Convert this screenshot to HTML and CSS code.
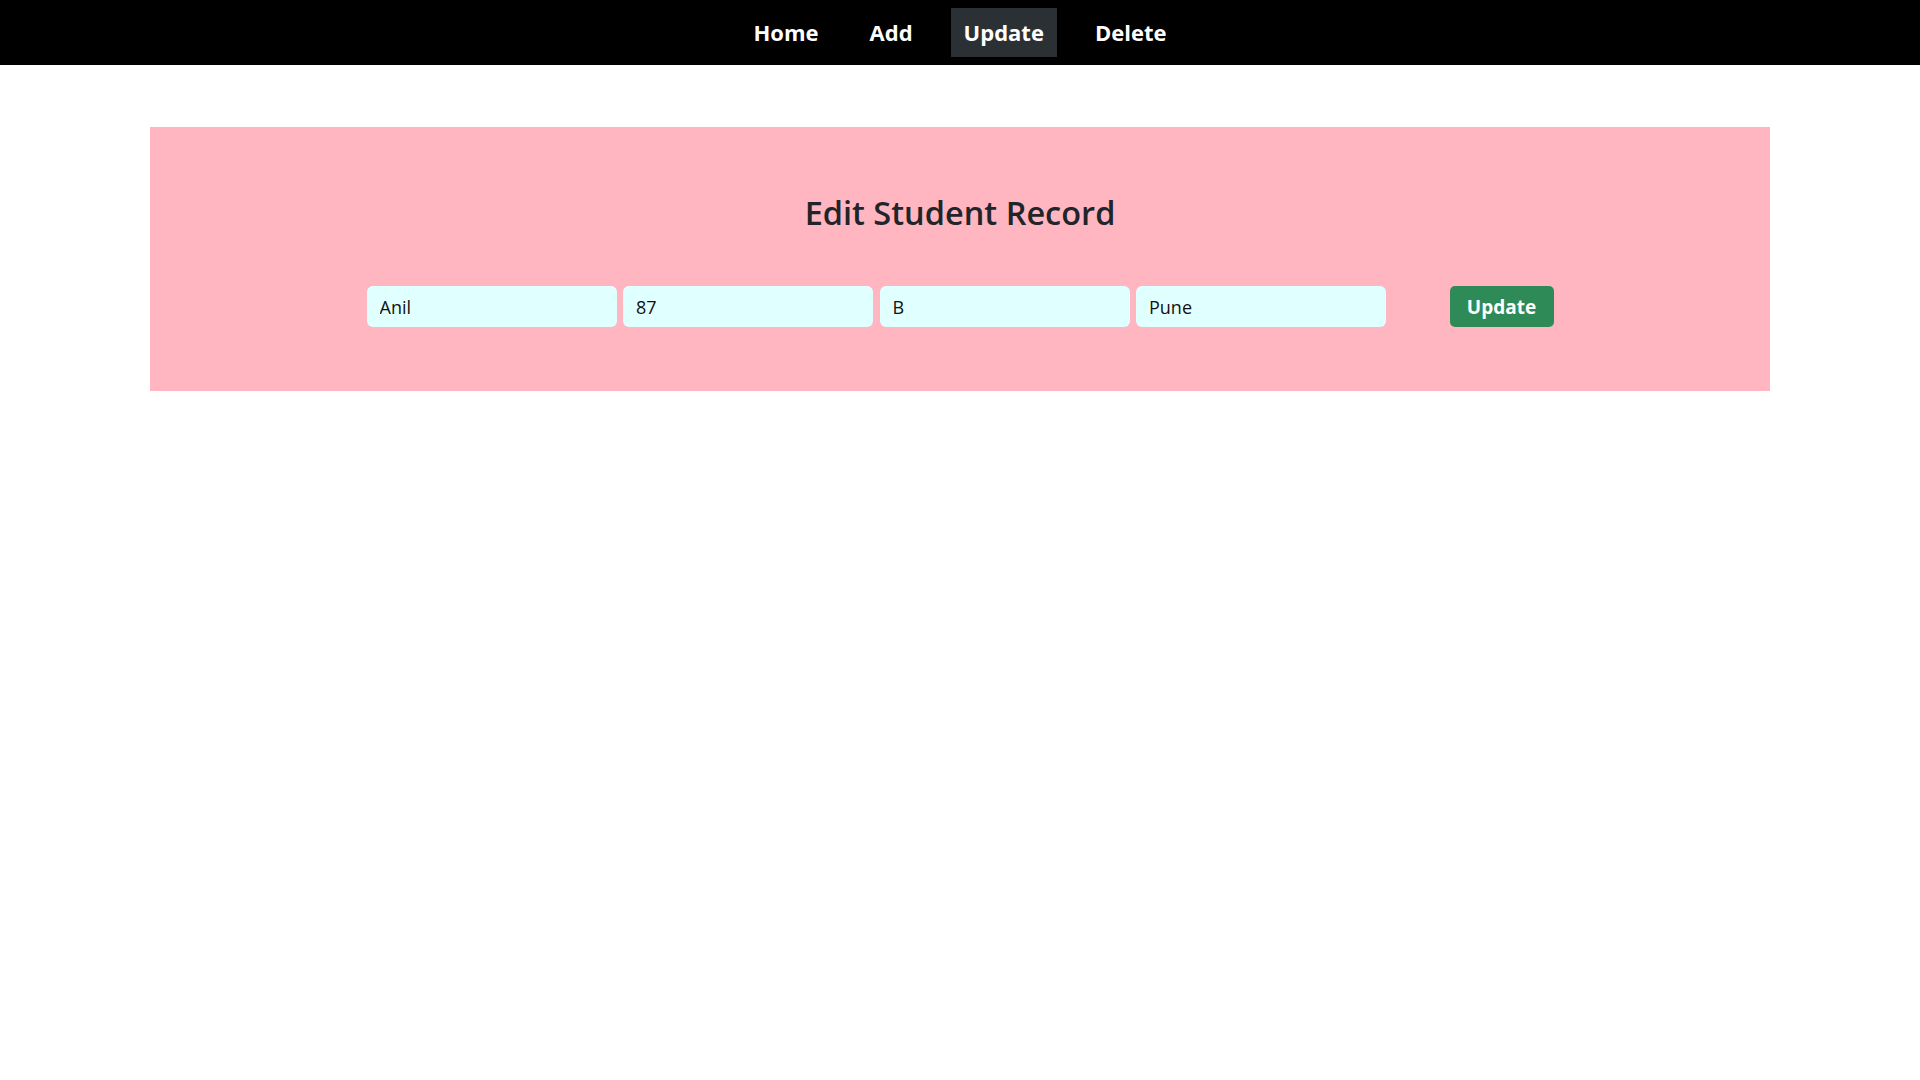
FILE: index.html
```html
<!DOCTYPE html>
<html lang="en">
<head>
<meta charset="utf-8">
<title>Edit Student Record</title>
<link rel="stylesheet" href="styles.css">
</head>
<body>
<nav class="navbar">
  <a class="nav-link" href="#">Home</a>
  <a class="nav-link" href="#">Add</a>
  <a class="nav-link active" href="#">Update</a>
  <a class="nav-link" href="#">Delete</a>
</nav>
<main class="panel">
  <h2 class="title">Edit Student Record</h2>
  <form class="record-form">
    <input class="field" type="text" value="Anil">
    <input class="field" type="text" value="87">
    <input class="field" type="text" value="B">
    <input class="field" type="text" value="Pune">
    <button class="btn-update" type="button">Update</button>
  </form>
</main>
</body>
</html>
```
FILE: styles.css
```css
* { box-sizing: border-box; }
html, body {
  margin: 0;
  padding: 0;
  background: #ffffff;
  font-family: "Open Sans", "Noto Sans", sans-serif;
  color: #212529;
}
.navbar {
  height: 65px;
  background: #000000;
  display: flex;
  justify-content: center;
  align-items: flex-start;
  padding-top: 8px;
  gap: 25px;
}
.nav-link {
  display: block;
  height: 49px;
  line-height: 49px;
  padding: 0 13px;
  color: #ffffff;
  text-decoration: none;
  font-size: 22px;
  font-weight: 700;
}
.nav-link.active {
  background: #2b3035;
}
.panel {
  width: 1620px;
  height: 264px;
  margin: 62px auto 0;
  background: #ffb6c1;
  padding-top: 62px;
}
.title {
  margin: 0;
  text-align: center;
  font-size: 32.5px;
  font-weight: 600;
  line-height: 48px;
  color: #212529;
}
.record-form {
  margin-top: 49px;
  display: flex;
  justify-content: center;
  gap: 6.5px;
}
.field {
  width: 250px;
  height: 41px;
  border: none;
  border-radius: 6px;
  background: #e0ffff;
  padding: 0 13px;
  font-family: "Open Sans", "Noto Sans", sans-serif;
  font-size: 18px;
  color: #111111;
  outline: none;
}
.btn-update {
  margin-left: 57px;
  width: 104px;
  height: 41px;
  border: none;
  border-radius: 5px;
  background: #2e8b57;
  color: #ffffff;
  font-family: "Open Sans", "Noto Sans", sans-serif;
  font-size: 19px;
  font-weight: 700;
  padding: 0;
}
```
